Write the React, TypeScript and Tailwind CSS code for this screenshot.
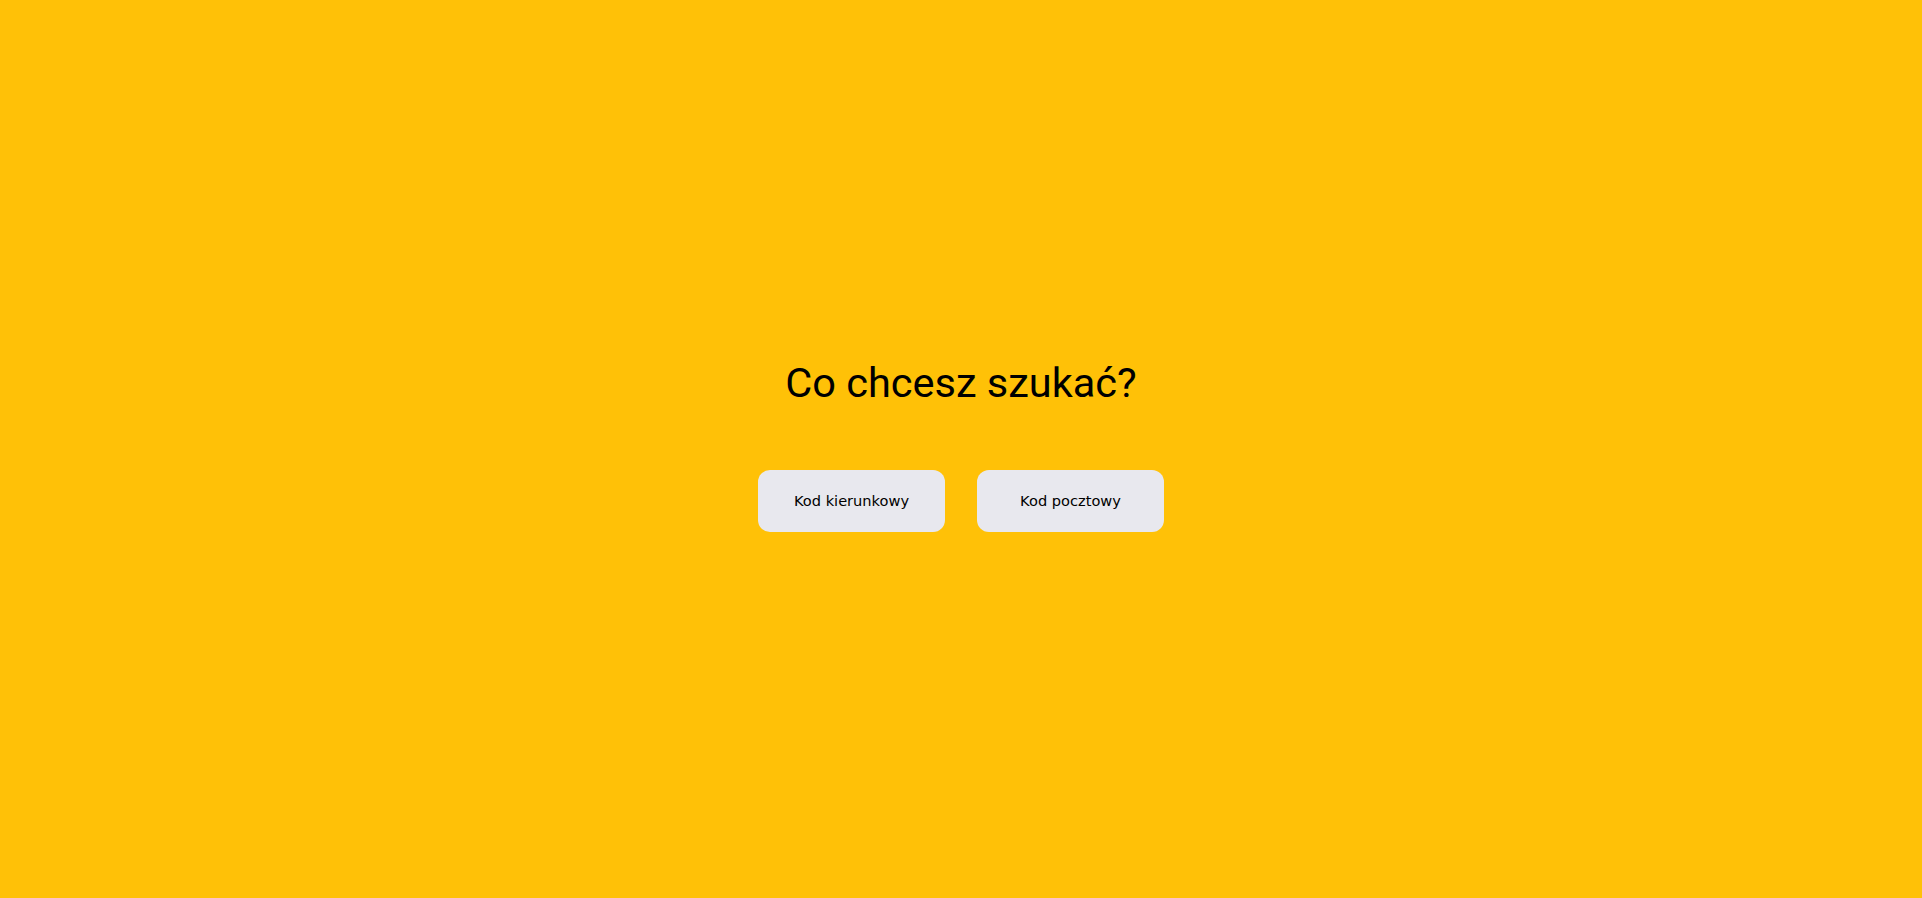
import React from "react";

function App() {
  const options = ["Kod kierunkowy", "Kod pocztowy"];

  return (
    <div className="h-screen w-full bg-[#ffc107] flex flex-col items-center justify-center pb-[7px]">
      <h1 className="text-[41.5px] leading-[48px] text-black font-['Roboto',sans-serif] font-normal">
        Co chcesz szukać?
      </h1>
      <div className="mt-[63px] flex gap-[32px]">
        {options.map((opt) => (
          <button
            key={opt}
            className="w-[187px] h-[62px] rounded-[12px] bg-[#e8e8ee] text-black text-[14.6px] font-['DejaVu_Sans',sans-serif] cursor-pointer"
          >
            {opt}
          </button>
        ))}
      </div>
    </div>
  );
}

export default App;
